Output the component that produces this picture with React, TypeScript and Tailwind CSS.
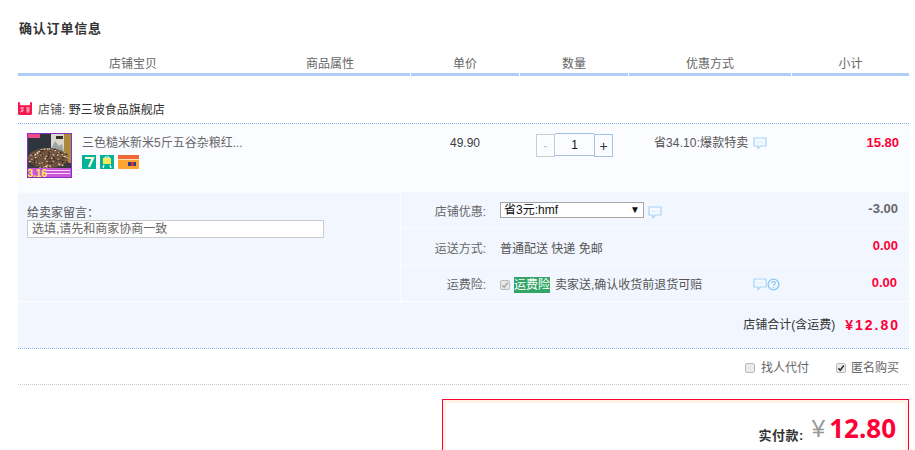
import React from "react";

const Bubble = () => (
  <svg width="14" height="13" viewBox="0 0 14 13" className="shrink-0">
    <path d="M1 1H13V9H7.5L5 11.5V9H1Z" fill="#f4f9ff" stroke="#a6d5f5" strokeWidth="1.2" />
    <path d="M4 5H5M6.5 5H7.5M9 5H10" stroke="#bcdcf2" strokeWidth="1" />
  </svg>
);

const Help = () => (
  <svg width="13" height="13" viewBox="0 0 13 13" className="shrink-0">
    <circle cx="6.5" cy="6.5" r="5.4" fill="none" stroke="#8cc8f0" strokeWidth="1.3" />
    <path d="M4.6 5.1C4.8 3 8.4 3.2 8.4 5.1C8.4 6.4 6.5 6.3 6.5 7.8" fill="none" stroke="#8cc8f0" strokeWidth="1.2" />
    <path d="M6.5 9V10.2" stroke="#8cc8f0" strokeWidth="1.2" />
  </svg>
);

const Check = ({ color, bg }: { color: string; bg: string }) => (
  <svg width="10" height="10" viewBox="0 0 10 10" className="shrink-0">
    <rect x="0.5" y="0.5" width="9" height="9" rx="1.5" fill={bg} stroke="#bbb" />
    <path d="M2.4 5.2L4.2 7.2L7.8 2.6" fill="none" stroke={color} strokeWidth="1.6" />
  </svg>
);

const grains = Array.from({ length: 170 }, (_, i) => {
  const a = Math.sin(i * 12.9898) * 43758.5453;
  const b = Math.sin(i * 78.233) * 24634.6345;
  const x = 1 + (a - Math.floor(a)) * 41;
  const y = 15 + (b - Math.floor(b)) * 20;
  const dx = x - 21;
  const dy = (y - 25) * 2.1;
  const fill = ["#d0ae80", "#2b211d", "#8f6a4a", "#efe0c4", "#4f3a2e"][i % 5];
  return { x, y, inside: dx * dx + dy * dy < 420, fill };
}).filter((g) => g.inside);

const Thumb = () => (
  <svg width="45" height="45" viewBox="0 0 45 45" className="shrink-0">
    <rect width="45" height="45" fill="#8a2fc0" />
    <rect x="1" y="1" width="43" height="43" fill="#2f353f" />
    <rect x="24" y="1" width="20" height="34" fill="#dcd8cc" />
    <rect x="37" y="1" width="7" height="34" fill="#a98a3c" />
    <rect x="29" y="3" width="7" height="3" fill="#30302c" />
    <rect x="1" y="1" width="12" height="4" fill="#ee4c84" />
    <path d="M25 14L28 8L32 13L35 11L38 24H25Z" fill="#9aa6a0" />
    <rect x="1" y="30" width="43" height="6" fill="#3a3a3e" />
    <ellipse cx="21" cy="25" rx="20" ry="10" fill="#6d5240" />
    {grains.map((g, i) => (
      <rect key={i} x={g.x} y={g.y} width="1.6" height="1.2" fill={g.fill} />
    ))}
    <rect x="1" y="35" width="43" height="9" fill="#cc56d8" />
    <rect x="18" y="37" width="25" height="1" fill="#f6d8f6" />
    <rect x="18" y="40" width="25" height="1" fill="#f6d8f6" />
    <text x="0.5" y="44" fontSize="10" fontWeight="700" fill="#fff14a" fontFamily="Liberation Sans">3.16</text>
  </svg>
);

const Tmall = () => (
  <svg width="14" height="13" viewBox="0 0 14 13" className="shrink-0">
    <path d="M0 1.5L3 3.2H11L14 1.5V11.5Q14 13 12.5 13H1.5Q0 13 0 11.5Z" fill="#f5164e" />
    <rect x="0" y="0" width="2" height="3" rx="1" fill="#f5164e" />
    <rect x="12" y="0" width="2" height="3" rx="1" fill="#f5164e" />
    <path d="M2.2 6H6M4 5V10M2.2 10L6 8M8 6H12M8 8H12M8.5 10H11.5M10 5V10" stroke="#ffd7de" strokeWidth="0.8" fill="none" />
  </svg>
);

const Seven = () => (
  <svg width="14" height="14" viewBox="0 0 14 14" className="shrink-0">
    <rect width="14" height="14" fill="#02b39a" />
    <path d="M3 3H11L7 12" fill="none" stroke="#fff8d8" strokeWidth="2.2" />
  </svg>
);

const Bag = () => (
  <svg width="14" height="14" viewBox="0 0 14 14" className="shrink-0">
    <rect width="14" height="14" fill="#02b39a" />
    <rect x="3" y="3" width="8" height="6" fill="#ffe75a" />
    <path d="M5 3V2H9V3" fill="none" stroke="#fff" />
    <path d="M4 10L3 13M10 10L11 13" stroke="#fff" strokeWidth="1.2" />
  </svg>
);

const Card = () => (
  <svg width="21" height="14" viewBox="0 0 21 14" className="shrink-0">
    <rect width="21" height="14" rx="1" fill="#fda32f" />
    <rect width="21" height="4" fill="#ef6a37" />
    <rect y="4" width="21" height="1" fill="#ffe0b0" />
    <rect x="10" y="7" width="8" height="4" fill="#1d3f86" />
    <rect x="13" y="7" width="3" height="4" fill="#d92c40" />
  </svg>
);

const HeadCell = ({ w, children, className = "" }: { w: string; children?: React.ReactNode; className?: string }) => (
  <div className={`flex flex-col ${w}`}>
    <div className={`h-[18px] pt-[1px] leading-[16px] ${className}`}>{children}</div>
    <div className="h-[3px] bg-[#aecdf7]" />
  </div>
);

const DetailRow = ({
  label,
  h,
  children,
  amount,
  amountCls,
}: {
  label: string;
  h: string;
  children: React.ReactNode;
  amount: string;
  amountCls: string;
}) => (
  <div className={`flex items-center bg-[#f2f6ff] pr-[11px] ${h}`}>
    <div className="w-[85px] shrink-0 text-right text-[#666]">{label}</div>
    <div className="ml-[14px] flex min-w-0 flex-1 items-center">{children}</div>
    <div className={`font-bold text-[13px] ${amountCls}`}>{amount}</div>
  </div>
);

export default function App() {
  return (
    <div
      className="h-[450px] w-[915px] overflow-hidden bg-white pl-[18px] text-[12px] leading-[16px] text-[#555]"
      style={{ fontFamily: '"Liberation Sans","Noto Sans CJK SC",sans-serif' }}
    >
      <div className="w-[891px]">
        <div className="flex h-[55px] items-center pl-[1px] pt-[2px] text-[13px] font-bold tracking-[0.8px] text-[#333]">确认订单信息</div>

        <div className="flex gap-[1px] text-center text-[#666]">
          <HeadCell w="w-[392px]" className="flex gap-[149px] pl-[91px]">
            <span>店铺宝贝</span>
            <span>商品属性</span>
          </HeadCell>
          <HeadCell w="w-[108px]">单价</HeadCell>
          <HeadCell w="w-[108px]">数量</HeadCell>
          <HeadCell w="w-[162px]">优惠方式</HeadCell>
          <HeadCell w="w-[117px]">小计</HeadCell>
        </div>

        <div className="flex h-[48px] items-end gap-[6px] border-b border-dotted border-[#80b2ff] pb-[5px]">
          <span className="mb-[3px] flex"><Tmall /></span>
          <span>
            店铺: <span className="text-[#333]">野三坡食品旗舰店</span>
          </span>
        </div>

        <div className="flex h-[68px] bg-[#fbfcff] pl-[9px] pt-[9px]">
          <Thumb />
          <div className="ml-[10px] flex w-[368px] shrink-0 flex-col pt-[2px]">
            <div className="h-[20px] text-[#666]">三色糙米新米5斤五谷杂粮红...</div>
            <div className="flex gap-[4px]">
              <Seven />
              <Bag />
              <Card />
            </div>
          </div>
          <div className="mt-[2px] w-[86px] shrink-0 text-[#3c3c3c]">49.90</div>
          <div className="flex h-[23px] w-[118px] shrink-0 items-start">
            <div className="mt-[1px] flex h-[23px] w-[19px] items-center justify-center border border-[#ccc] text-[#bbb]">-</div>
            <div className="flex h-[23px] w-[39px] items-center justify-center border-y border-[#a2c3e2] text-[#111]">1</div>
            <div className="mt-[1px] flex h-[23px] w-[19px] items-center justify-center border border-[#a2c3e2] text-[14px] text-[#333]">+</div>
          </div>
          <div className="mt-[2px] flex w-[168px] shrink-0 items-center gap-[5px] self-start tracking-[0.1px]">
            <span className="whitespace-nowrap">省34.10:爆款特卖</span>
            <Bubble />
          </div>
          <div className="mt-[2px] w-[0] flex-1 pr-[10px] text-right text-[13px] font-bold text-[#ff0036]">15.80</div>
        </div>

        <div className="flex h-[109px] bg-[#fbfcff]">
          <div className="mr-[1px] mt-[1px] w-[382px] shrink-0 bg-[#f2f6ff] px-[9px] pt-[12px]">
            <div className="h-[15px]">给卖家留言：</div>
            <div className="flex h-[18px] w-[297px] items-center border border-[#ccc] bg-white pl-[4px] text-[#666]">选填,请先和商家协商一致</div>
          </div>
          <div className="flex min-w-0 flex-1 flex-col gap-[1px]">
            <DetailRow label="店铺优惠:" h="h-[36px] pt-[4px]" amount="-3.00" amountCls="mb-[7px] text-[#666]">
              <div className="mb-[4px] flex h-[16px] w-[144px] items-center justify-between border border-[#a6a6a6] bg-white pl-[3px] pr-[3px] text-[#111]">
                <span>省3元:hmf</span>
                <span className="text-[10px] leading-[8px]">▼</span>
              </div>
              <span className="ml-[4px] flex"><Bubble /></span>
            </DetailRow>
            <DetailRow label="运送方式:" h="h-[36px] pt-[4px]" amount="0.00" amountCls="mb-[7px] text-[#ff0036]">
              <span className="whitespace-pre">普通配送 快递 免邮</span>
            </DetailRow>
            <DetailRow label="运费险:" h="h-[35px] pt-[2px]" amount="0.00" amountCls="mb-[3px] mr-[1px] text-[#ff0036]">
              <Check color="#aaa" bg="#e8e8e8" />
              <span className="ml-[4px] bg-[#33a566] text-white">运费险</span>
              <span className="ml-[5px] whitespace-nowrap">卖家送,确认收货前退货可赔</span>
              <span className="ml-[51px] flex items-center">
                <Bubble />
                <Help />
              </span>
            </DetailRow>
          </div>
        </div>

        <div className="flex h-[47px] items-center justify-end gap-[10px] border-t border-white bg-[#f2f6ff] pr-[9px] pb-[1px]">
          <span className="text-[#333]">店铺合计(含运费)</span>
          <span className="text-[14px] font-bold tracking-[2px] text-[#ff0036]">¥12.80</span>
        </div>

        <div className="flex h-[37px] items-center justify-end border-y border-dotted border-t-[#80b2ff] border-b-[#ccc] pr-[10px] pt-[3px] text-[#666]">
          <div className="flex items-center gap-[6px]">
            <Check color="transparent" bg="#ebebeb" />
            <span>找人代付</span>
          </div>
          <div className="ml-[27px] flex items-center gap-[5px]">
            <Check color="#333" bg="#ebebeb" />
            <span>匿名购买</span>
          </div>
        </div>

        <div className="ml-[424px] mt-[14px] h-[100px] border border-[#ff0036]">
          <div className="h-full border-[3px] border-[#fff3e8] bg-white">
            <div className="flex items-start justify-end pr-[9px] pt-[11px]">
              <span className="mt-[14px] whitespace-nowrap text-[13px] font-bold tracking-[0.5px] text-[#333]">实付款:</span>
              <span className="ml-[8px] mt-[1px] text-[24px] leading-[28px] text-[#999]">¥</span>
              <span
                className="ml-[4px] text-[26px] font-bold leading-[28px] text-[#ff0036]"
                style={{ fontFamily: '"Noto Sans",sans-serif' }}
              >
                12.80
              </span>
            </div>
          </div>
        </div>
      </div>
    </div>
  );
}
